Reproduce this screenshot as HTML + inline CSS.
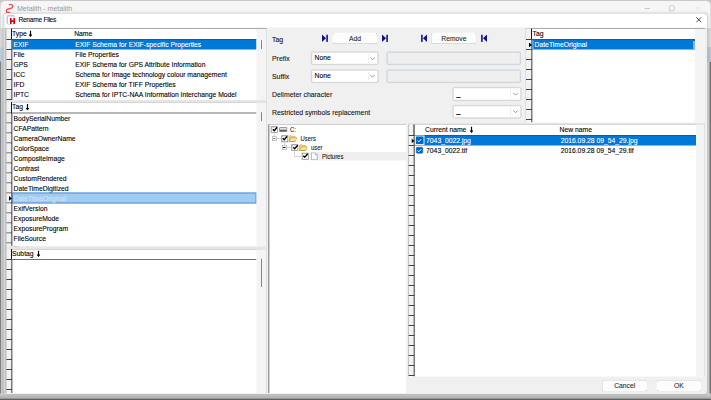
<!DOCTYPE html><html><head><meta charset="utf-8"><title>Rename Files</title><style>
html,body{margin:0;padding:0;background:#c9c9c9;overflow:hidden}
body{width:711px;height:400px;position:relative;font-family:"Liberation Sans",sans-serif;}
#st{position:absolute;left:0;top:0;width:1422px;height:800px;transform:scale(0.5);transform-origin:0 0;font-size:13.54px;color:#000;overflow:hidden;background:#c9c9c9;-webkit-text-stroke:0.2px}
#st div,#st span,#st svg{position:absolute;box-sizing:border-box;white-space:nowrap}
.tbl{background:#fff;overflow:hidden}
.sel{background:#0078d7}
.btn{background:#fdfdfd;border:1.4px solid #d0d0d0;border-radius:5px;text-align:center;border-bottom-color:#bdbdbd;-webkit-text-stroke:0.15px;color:#1c1c1c}
.cmb{background:#fff;border:1.8px solid #bcbcbc;border-radius:2.6px;box-shadow:0 0 0 1.6px #e2e2e2}
.dis{background:#efefef;border:1.7px solid #aebdcc;border-radius:3px;box-shadow:0 0 0 1.6px #dde3e9}
</style></head><body><div id="st">
<div style="left:1.2px;top:2px;width:1419.6px;height:78px;background:#f6f6f6;border-radius:9px 9px 0 0"></div>
<svg style="left:11.2px;top:6.8px" width="16.8" height="19.2" viewBox="0 0 16.8 19.2" preserveAspectRatio="none"><path d="M8 2.4 C11.8 0.4 16 4 14 7.6 C12 10.8 3.6 10.4 1.6 13.6 C0 16.8 4 18.8 8.4 18" fill="none" stroke="#e9564c" stroke-width="2.9" stroke-linecap="round"/></svg>
<div style="left:34px;top:6.4px;height:20px;line-height:20px;font-size:14.2px;color:#989898;letter-spacing:-0.1px;-webkit-text-stroke:0">Metalith - metalith</div>
<div style="left:1289.2px;top:16.2px;width:10.4px;height:1.2px;background:#9c9c9c"></div>
<div style="left:1338px;top:11.2px;width:11.2px;height:11px;border:1.3px solid #a6a6a6;border-radius:2.4px"></div>
<svg style="left:1390px;top:11.6px" width="10.4" height="10.4" viewBox="0 0 10.4 10.4" preserveAspectRatio="none"><path d="M0.6 0.6 L9.8 9.8 M9.8 0.6 L0.6 9.8" stroke="#dedede" stroke-width="1.2"/></svg>
<div style="left:0px;top:56px;width:12px;height:744px;background:#d8d8d8"></div>
<div style="left:0px;top:95px;width:12px;height:28px;background:#c0ccd8"></div>
<div style="left:0px;top:123px;width:12px;height:677px;background:#cacaca"></div>
<div style="left:0px;top:123px;width:2.2px;height:677px;background:#808488"></div>
<div style="left:1412px;top:56px;width:10px;height:744px;background:#dadada"></div>
<div style="left:1414px;top:95px;width:8px;height:2px;background:#a8a8a8"></div>
<div style="left:1414px;top:97px;width:8px;height:27px;background:#bcc3d0"></div>
<div style="left:1414px;top:124px;width:8px;height:676px;background:#d6d6d6"></div>
<div style="left:1419.4px;top:124px;width:2.6px;height:676px;background:#727272"></div>
<div style="left:0px;top:787.2px;width:1422px;height:12.8px;background:linear-gradient(#d4d4d4 0,#c8c8c8 14%,#c2c2c2 38%,#b6b6b6 48%,#b2b2b2 75%,#606060 81%,#5e5e5e 100%)"></div>
<div style="left:7.4px;top:25.6px;width:1407.6px;height:762.8px;background:#f0f0f0;border:1.6px solid #c2c2c2;border-left-color:#f6f6f6;border-bottom:2px solid #f3f3f3;border-radius:8px;box-shadow:0 0 5px rgba(0,0,0,0.2);overflow:hidden"><div style="left:0px;top:0px;width:1422px;height:28.4px;background:#fff"></div></div>
<div style="left:9.2px;top:34px;width:1.2px;height:22px;background:#dcdcdc"></div>
<div style="left:12.8px;top:30.4px;width:17px;height:19px;background:#fff;border:3.4px solid #a9cdec;border-radius:4.5px;border-right-width:1px;border-bottom-width:1.6px"></div>
<svg style="left:19.8px;top:35.6px" width="10" height="12.8" viewBox="0 0 10 12.8" preserveAspectRatio="none"><path d="M0 0 H3.3 V4.6 H6.7 V0 H10 V12.8 H6.7 V8 H3.3 V12.8 H0 Z" fill="#e2000f"/></svg>
<div style="left:36.8px;top:29.6px;height:20px;line-height:20px;font-size:13.2px;color:#0c0c0c;letter-spacing:-0.5px">Rename Files</div>
<svg style="left:1392.4px;top:34.4px" width="11.2" height="11.2" viewBox="0 0 11.2 11.2" preserveAspectRatio="none"><path d="M0.6 0.6 L10.6 10.6 M10.6 0.6 L0.6 10.6" stroke="#111" stroke-width="1.5"/></svg>
<div class="tbl" style="left:11.2px;top:56px;width:522.8px;height:144px"><div style="left:0px;top:0px;width:522.8px;height:1.6px;background:#adadad"></div><div style="left:13px;top:0.6px;height:20px;line-height:20px;z-index:2;">Type</div><div style="left:137.2px;top:0.6px;height:20px;line-height:20px;z-index:2;">Name</div><svg style="left:45.8px;top:4.8px" width="8" height="13.2" viewBox="0 0 8 13.2" preserveAspectRatio="none"><path d="M2.8 0 H5.2 V8 H7.9 L4 13.2 L0.1 8 H2.8 Z" fill="#000"/></svg><div class="sel" style="left:12.6px;top:23.4px;width:489px;height:20px;"></div><div style="left:16px;top:23.4px;height:20px;line-height:20px;color:#fff;">EXIF</div><div style="left:139.4px;top:23.4px;height:20px;line-height:20px;color:#fff;">EXIF Schema for EXIF-specific Properties</div><div style="left:16px;top:43.4px;height:20px;line-height:20px;">File</div><div style="left:139.4px;top:43.4px;height:20px;line-height:20px;">File Properties</div><div style="left:16px;top:63.4px;height:20px;line-height:20px;">GPS</div><div style="left:139.4px;top:63.4px;height:20px;line-height:20px;">EXIF Schema for GPS Attribute Information</div><div style="left:16px;top:83.4px;height:20px;line-height:20px;">ICC</div><div style="left:139.4px;top:83.4px;height:20px;line-height:20px;">Schema for Image technology colour management</div><div style="left:16px;top:103.4px;height:20px;line-height:20px;">IFD</div><div style="left:139.4px;top:103.4px;height:20px;line-height:20px;">EXIF Schema for TIFF Properties</div><div style="left:16px;top:123.4px;height:20px;line-height:20px;">IPTC</div><div style="left:139.4px;top:123.4px;height:20px;line-height:20px;">Schema for IPTC-NAA Information Interchange Model</div><div style="left:12px;top:21.8px;width:489.6px;height:2px;background:rgba(0,0,0,0.56)"></div><div style="left:0px;top:1.2px;width:12.8px;height:142.8px;background:#f2f2f2"></div><div style="left:11px;top:22.8px;width:2.4px;height:121.2px;background:#7c7c7c"></div><div style="left:11.2px;top:1.2px;width:2px;height:22.4px;background:#141414"></div><div style="left:1.2px;top:21.8px;width:11.6px;height:2px;background:#424242"></div><div style="left:1.2px;top:23.9px;width:10px;height:1.1px;background:#fff"></div><div style="left:1.2px;top:41.8px;width:11.6px;height:2px;background:#424242"></div><div style="left:1.2px;top:43.9px;width:10px;height:1.1px;background:#fff"></div><div style="left:1.2px;top:61.8px;width:11.6px;height:2px;background:#424242"></div><div style="left:1.2px;top:63.9px;width:10px;height:1.1px;background:#fff"></div><div style="left:1.2px;top:81.8px;width:11.6px;height:2px;background:#424242"></div><div style="left:1.2px;top:83.9px;width:10px;height:1.1px;background:#fff"></div><div style="left:1.2px;top:101.8px;width:11.6px;height:2px;background:#424242"></div><div style="left:1.2px;top:103.9px;width:10px;height:1.1px;background:#fff"></div><div style="left:1.2px;top:121.8px;width:11.6px;height:2px;background:#424242"></div><div style="left:1.2px;top:123.9px;width:10px;height:1.1px;background:#fff"></div><div style="left:1.2px;top:141.8px;width:11.6px;height:2px;background:#424242"></div><div style="left:1.2px;top:143.9px;width:10px;height:1.1px;background:#fff"></div><div style="left:0px;top:1.2px;width:1.2px;height:142.8px;background:#969696"></div><div style="left:501.6px;top:1.6px;width:21.2px;height:142.4px;background:#f4f4f4"></div><div style="left:521.8px;top:0px;width:1px;height:144px;background:#cdcdcd"></div><div style="left:511px;top:24px;width:1.8px;height:18px;background:#858585;border-radius:1px"></div></div>
<div class="tbl" style="left:11.2px;top:203.2px;width:522.8px;height:289.4px"><div style="left:0px;top:0px;width:522.8px;height:1.6px;background:#adadad"></div><div style="left:13px;top:0.5px;height:20px;line-height:20px;z-index:2;">Tag</div><svg style="left:40px;top:4.6px" width="8" height="13.2" viewBox="0 0 8 13.2" preserveAspectRatio="none"><path d="M2.8 0 H5.2 V8 H7.9 L4 13.2 L0.1 8 H2.8 Z" fill="#000"/></svg><div style="left:16px;top:23.8px;height:20px;line-height:20px;">BodySerialNumber</div><div style="left:16px;top:43.8px;height:20px;line-height:20px;">CFAPattern</div><div style="left:16px;top:63.8px;height:20px;line-height:20px;">CameraOwnerName</div><div style="left:16px;top:83.8px;height:20px;line-height:20px;">ColorSpace</div><div style="left:16px;top:103.8px;height:20px;line-height:20px;">CompositeImage</div><div style="left:16px;top:123.8px;height:20px;line-height:20px;">Contrast</div><div style="left:16px;top:143.8px;height:20px;line-height:20px;">CustomRendered</div><div style="left:16px;top:163.8px;height:20px;line-height:20px;">DateTimeDigitized</div><div style="left:12.4px;top:181.8px;width:489.2px;height:21.6px;background:#a1cbef;border:2px solid #4c94da"></div><div style="left:16px;top:183.8px;height:20px;line-height:20px;color:#d2e3f5;">DateTimeOriginal</div><div style="left:16px;top:203.8px;height:20px;line-height:20px;">ExifVersion</div><div style="left:16px;top:223.8px;height:20px;line-height:20px;">ExposureMode</div><div style="left:16px;top:243.8px;height:20px;line-height:20px;">ExposureProgram</div><div style="left:16px;top:263.8px;height:20px;line-height:20px;">FileSource</div><div style="left:16px;top:283.8px;height:20px;line-height:20px;">Flash</div><div style="left:12px;top:21.6px;width:489.6px;height:2px;background:rgba(0,0,0,0.56)"></div><div style="left:0px;top:1.2px;width:12.8px;height:288.2px;background:#f2f2f2"></div><div style="left:11px;top:22.6px;width:2.4px;height:266.8px;background:#7c7c7c"></div><div style="left:11.2px;top:1.2px;width:2px;height:22.2px;background:#141414"></div><div style="left:1.2px;top:21.6px;width:11.6px;height:2px;background:#424242"></div><div style="left:1.2px;top:23.7px;width:10px;height:1.1px;background:#fff"></div><div style="left:1.2px;top:41.6px;width:11.6px;height:2px;background:#424242"></div><div style="left:1.2px;top:43.7px;width:10px;height:1.1px;background:#fff"></div><div style="left:1.2px;top:61.6px;width:11.6px;height:2px;background:#424242"></div><div style="left:1.2px;top:63.7px;width:10px;height:1.1px;background:#fff"></div><div style="left:1.2px;top:81.6px;width:11.6px;height:2px;background:#424242"></div><div style="left:1.2px;top:83.7px;width:10px;height:1.1px;background:#fff"></div><div style="left:1.2px;top:101.6px;width:11.6px;height:2px;background:#424242"></div><div style="left:1.2px;top:103.7px;width:10px;height:1.1px;background:#fff"></div><div style="left:1.2px;top:121.6px;width:11.6px;height:2px;background:#424242"></div><div style="left:1.2px;top:123.7px;width:10px;height:1.1px;background:#fff"></div><div style="left:1.2px;top:141.6px;width:11.6px;height:2px;background:#424242"></div><div style="left:1.2px;top:143.7px;width:10px;height:1.1px;background:#fff"></div><div style="left:1.2px;top:161.6px;width:11.6px;height:2px;background:#424242"></div><div style="left:1.2px;top:163.7px;width:10px;height:1.1px;background:#fff"></div><div style="left:1.2px;top:181.6px;width:11.6px;height:2px;background:#424242"></div><div style="left:1.2px;top:183.7px;width:10px;height:1.1px;background:#fff"></div><div style="left:1.2px;top:201.6px;width:11.6px;height:2px;background:#424242"></div><div style="left:1.2px;top:203.7px;width:10px;height:1.1px;background:#fff"></div><div style="left:1.2px;top:221.6px;width:11.6px;height:2px;background:#424242"></div><div style="left:1.2px;top:223.7px;width:10px;height:1.1px;background:#fff"></div><div style="left:1.2px;top:241.6px;width:11.6px;height:2px;background:#424242"></div><div style="left:1.2px;top:243.7px;width:10px;height:1.1px;background:#fff"></div><div style="left:1.2px;top:261.6px;width:11.6px;height:2px;background:#424242"></div><div style="left:1.2px;top:263.7px;width:10px;height:1.1px;background:#fff"></div><div style="left:1.2px;top:281.6px;width:11.6px;height:2px;background:#424242"></div><div style="left:1.2px;top:283.7px;width:10px;height:1.1px;background:#fff"></div><div style="left:0px;top:1.2px;width:1.2px;height:288.2px;background:#969696"></div><svg style="left:6.6px;top:188.8px" width="6" height="9.6" viewBox="0 0 6 9.6" preserveAspectRatio="none"><path d="M0 0 L6 4.8 L0 9.6 Z" fill="#000"/></svg><div style="left:501.6px;top:1.6px;width:21.2px;height:287.8px;background:#f4f4f4"></div><div style="left:521.8px;top:0px;width:1px;height:289.4px;background:#cdcdcd"></div><div style="left:511px;top:20.8px;width:1.8px;height:18px;background:#858585;border-radius:1px"></div></div>
<div class="tbl" style="left:11.2px;top:497.2px;width:522.8px;height:289px"><div style="left:0px;top:0px;width:522.8px;height:1.6px;background:#adadad"></div><div style="left:13px;top:0px;height:20px;line-height:20px;z-index:2;">Subtag</div><svg style="left:61.6px;top:3.6px" width="8" height="13.2" viewBox="0 0 8 13.2" preserveAspectRatio="none"><path d="M2.8 0 H5.2 V8 H7.9 L4 13.2 L0.1 8 H2.8 Z" fill="#000"/></svg><div style="left:12px;top:20.6px;width:489.6px;height:2px;background:rgba(0,0,0,0.56)"></div><div style="left:0px;top:1.2px;width:12.8px;height:287.8px;background:#f2f2f2"></div><div style="left:11px;top:21.6px;width:2.4px;height:267.4px;background:#7c7c7c"></div><div style="left:11.2px;top:1.2px;width:2px;height:21.2px;background:#141414"></div><div style="left:1.2px;top:20.6px;width:11.6px;height:2px;background:#424242"></div><div style="left:1.2px;top:22.7px;width:10px;height:1.1px;background:#fff"></div><div style="left:1.2px;top:40.6px;width:11.6px;height:2px;background:#424242"></div><div style="left:1.2px;top:42.7px;width:10px;height:1.1px;background:#fff"></div><div style="left:1.2px;top:60.6px;width:11.6px;height:2px;background:#424242"></div><div style="left:1.2px;top:62.7px;width:10px;height:1.1px;background:#fff"></div><div style="left:1.2px;top:80.6px;width:11.6px;height:2px;background:#424242"></div><div style="left:1.2px;top:82.7px;width:10px;height:1.1px;background:#fff"></div><div style="left:1.2px;top:100.6px;width:11.6px;height:2px;background:#424242"></div><div style="left:1.2px;top:102.7px;width:10px;height:1.1px;background:#fff"></div><div style="left:1.2px;top:120.6px;width:11.6px;height:2px;background:#424242"></div><div style="left:1.2px;top:122.7px;width:10px;height:1.1px;background:#fff"></div><div style="left:1.2px;top:140.6px;width:11.6px;height:2px;background:#424242"></div><div style="left:1.2px;top:142.7px;width:10px;height:1.1px;background:#fff"></div><div style="left:1.2px;top:160.6px;width:11.6px;height:2px;background:#424242"></div><div style="left:1.2px;top:162.7px;width:10px;height:1.1px;background:#fff"></div><div style="left:1.2px;top:180.6px;width:11.6px;height:2px;background:#424242"></div><div style="left:1.2px;top:182.7px;width:10px;height:1.1px;background:#fff"></div><div style="left:1.2px;top:200.6px;width:11.6px;height:2px;background:#424242"></div><div style="left:1.2px;top:202.7px;width:10px;height:1.1px;background:#fff"></div><div style="left:1.2px;top:220.6px;width:11.6px;height:2px;background:#424242"></div><div style="left:1.2px;top:222.7px;width:10px;height:1.1px;background:#fff"></div><div style="left:1.2px;top:240.6px;width:11.6px;height:2px;background:#424242"></div><div style="left:1.2px;top:242.7px;width:10px;height:1.1px;background:#fff"></div><div style="left:1.2px;top:260.6px;width:11.6px;height:2px;background:#424242"></div><div style="left:1.2px;top:262.7px;width:10px;height:1.1px;background:#fff"></div><div style="left:1.2px;top:280.6px;width:11.6px;height:2px;background:#424242"></div><div style="left:1.2px;top:282.7px;width:10px;height:1.1px;background:#fff"></div><div style="left:0px;top:1.2px;width:1.2px;height:287.8px;background:#969696"></div><div style="left:501.6px;top:1.6px;width:21.2px;height:287.4px;background:#f4f4f4"></div><div style="left:521.8px;top:0px;width:1px;height:289px;background:#cdcdcd"></div><div style="left:511px;top:19.6px;width:1.8px;height:56.8px;background:#858585;border-radius:1px"></div></div>
<div style="left:11.2px;top:200px;width:522.8px;height:3.4px;background:#e6e6e6"></div>
<div style="left:11.2px;top:492.6px;width:522.8px;height:4.8px;background:#e6e6e6"></div>
<div style="left:9.2px;top:56px;width:3.4px;height:730.4px;background:#bebebe"></div>
<div style="left:544px;top:68.6px;height:20px;line-height:20px;font-size:13.8px;-webkit-text-stroke:0.2px;color:#151515">Tag</div>
<div style="left:544px;top:106.8px;height:20px;line-height:20px;font-size:13.8px;-webkit-text-stroke:0.2px;color:#151515">Prefix</div>
<div style="left:544px;top:142.8px;height:20px;line-height:20px;font-size:13.8px;-webkit-text-stroke:0.2px;color:#151515">Suffix</div>
<div style="left:544px;top:180.2px;height:20px;line-height:20px;font-size:13.8px;-webkit-text-stroke:0.2px;color:#151515">Delimeter character</div>
<div style="left:544px;top:215px;height:20px;line-height:20px;font-size:13.8px;-webkit-text-stroke:0.2px;color:#151515">Restricted symbols replacement</div>
<svg style="left:643.8px;top:69.4px" width="12" height="14.8" viewBox="0 0 12 14" preserveAspectRatio="none"><path d="M0 0 L8 7 L0 14 Z" fill="#12128c"/><rect x="8.6" y="0" width="3.2" height="14" fill="#12128c"/></svg>
<div class="btn" style="left:665px;top:65px;width:89.8px;height:23.2px;"><div style="left:0px;top:1px;height:20px;line-height:20px;left:0;right:0">Add</div></div>
<svg style="left:764px;top:69.4px" width="12" height="14.8" viewBox="0 0 12 14" preserveAspectRatio="none"><path d="M0 0 L8 7 L0 14 Z" fill="#12128c"/><rect x="8.6" y="0" width="3.2" height="14" fill="#12128c"/></svg>
<svg style="left:842px;top:69.4px" width="12" height="14.8" viewBox="0 0 12 14" preserveAspectRatio="none"><path d="M12 0 L4 7 L12 14 Z" fill="#12128c"/><rect x="0.2" y="0" width="3.2" height="14" fill="#12128c"/></svg>
<div class="btn" style="left:862.4px;top:65px;width:90.8px;height:23.2px;"><div style="left:0px;top:1px;height:20px;line-height:20px;left:0;right:0">Remove</div></div>
<svg style="left:962px;top:69.4px" width="12" height="14.8" viewBox="0 0 12 14" preserveAspectRatio="none"><path d="M12 0 L4 7 L12 14 Z" fill="#12128c"/><rect x="0.2" y="0" width="3.2" height="14" fill="#12128c"/></svg>
<div class="cmb" style="left:623.2px;top:104.4px;width:132.8px;height:24.8px;"><div style="left:4.8px;top:0.8px;height:20px;line-height:20px;">None</div><div style="left:112.4px;top:2.8px;width:0.8px;height:17.6px;background:#e0e0e0"></div><svg style="left:115.6px;top:8.4px" width="10.4" height="6.4" viewBox="0 0 10.4 6.4" preserveAspectRatio="none"><path d="M0.6 0.8 L5.2 5.4 L9.8 0.8" fill="none" stroke="#707070" stroke-width="1.4"/></svg></div>
<div class="dis" style="left:774.4px;top:104.4px;width:266.4px;height:24.8px;"></div>
<div class="cmb" style="left:623.2px;top:139.8px;width:132.8px;height:24.8px;"><div style="left:4.8px;top:0.8px;height:20px;line-height:20px;">None</div><div style="left:112.4px;top:2.8px;width:0.8px;height:17.6px;background:#e0e0e0"></div><svg style="left:115.6px;top:8.4px" width="10.4" height="6.4" viewBox="0 0 10.4 6.4" preserveAspectRatio="none"><path d="M0.6 0.8 L5.2 5.4 L9.8 0.8" fill="none" stroke="#707070" stroke-width="1.4"/></svg></div>
<div class="dis" style="left:774.4px;top:139.8px;width:266.4px;height:24.8px;"></div>
<div class="cmb" style="left:906.4px;top:175.2px;width:135.6px;height:25.6px;"><div style="left:5.8px;top:0.8px;height:20px;line-height:20px;-webkit-text-stroke:0.6px;color:#333">_</div><div style="left:112.8px;top:2.8px;width:0.8px;height:18.4px;background:#e2e2e2"></div><svg style="left:118.8px;top:8.8px" width="10.4" height="6.4" viewBox="0 0 10.4 6.4" preserveAspectRatio="none"><path d="M0.6 0.8 L5.2 5.4 L9.8 0.8" fill="none" stroke="#707070" stroke-width="1.4"/></svg></div>
<div class="cmb" style="left:906.4px;top:210.6px;width:135.6px;height:25.6px;"><div style="left:5.8px;top:0.8px;height:20px;line-height:20px;-webkit-text-stroke:0.6px;color:#333">_</div><div style="left:112.8px;top:2.8px;width:0.8px;height:18.4px;background:#e2e2e2"></div><svg style="left:118.8px;top:8.8px" width="10.4" height="6.4" viewBox="0 0 10.4 6.4" preserveAspectRatio="none"><path d="M0.6 0.8 L5.2 5.4 L9.8 0.8" fill="none" stroke="#707070" stroke-width="1.4"/></svg></div>
<div style="left:536.2px;top:248.6px;width:276.2px;height:537.6px;background:#fff"></div>
<div style="left:536.2px;top:248.6px;width:276.2px;height:1.2px;background:#a4a4a4"></div>
<div style="left:536.2px;top:248.6px;width:3px;height:537.6px;background:#9c9c9c"></div>
<div style="left:619.6px;top:304.4px;width:192.8px;height:16.2px;background:#efefef"></div>
<div style="left:548.2px;top:265.6px;width:1px;height:6.8px;background:#a8a8a8"></div>
<div style="left:553.2px;top:277px;width:8.8px;height:1px;background:#a8a8a8"></div>
<div style="left:568.6px;top:283.6px;width:1px;height:6.4px;background:#a8a8a8"></div>
<div style="left:573.6px;top:294.6px;width:9.2px;height:1px;background:#a8a8a8"></div>
<div style="left:589.2px;top:300.8px;width:1px;height:12.4px;background:#a8a8a8"></div>
<div style="left:589.2px;top:312.2px;width:14px;height:1px;background:#a8a8a8"></div>
<div style="left:542.2px;top:252.6px;width:12.8px;height:12.8px;background:#fff;border:1.8px solid #6e6e6e;box-shadow:0 0 0 1px #cfcfcf, inset 1px 1px 0 #b8b8b8"></div><svg style="left:543.6px;top:253px" width="11.2" height="11.2" viewBox="0 0 11.2 11.2" preserveAspectRatio="none"><path d="M1.6 5.6 L4.4 8.6 L10.4 1.4" fill="none" stroke="#000" stroke-width="2.7" stroke-linejoin="miter"/></svg>
<svg style="left:558px;top:254px" width="16.8" height="10.4" viewBox="0 0 16.8 10.4" preserveAspectRatio="none"><rect x="0.7" y="0.7" width="15.4" height="9" rx="2.6" fill="#e2e2e2" stroke="#555" stroke-width="1.3"/><rect x="1.4" y="5.6" width="14" height="3.6" rx="1.4" fill="#5e5e5e"/></svg>
<div style="left:580px;top:248.8px;height:20px;line-height:20px;font-size:13.5px;transform:scaleX(0.875);transform-origin:0 50%;-webkit-text-stroke:0.18px;color:#151515;">C:</div>
<div style="left:543.6px;top:272.8px;width:9.2px;height:9.2px;background:#fff;border:1.2px solid #8c8c8c"></div><div style="left:545.8px;top:276.8px;width:4.8px;height:1.2px;background:#111"></div>
<div style="left:562.8px;top:271px;width:12.8px;height:12.8px;background:#fff;border:1.8px solid #6e6e6e;box-shadow:0 0 0 1px #cfcfcf, inset 1px 1px 0 #b8b8b8"></div><svg style="left:564.2px;top:271.4px" width="11.2" height="11.2" viewBox="0 0 11.2 11.2" preserveAspectRatio="none"><path d="M1.6 5.6 L4.4 8.6 L10.4 1.4" fill="none" stroke="#000" stroke-width="2.7" stroke-linejoin="miter"/></svg>
<svg style="left:577.2px;top:270px" width="17.6" height="14" viewBox="0 0 17.6 14" preserveAspectRatio="none"><path d="M1 2.8 Q1 1.6 2.2 1.6 H5.6 L7.2 3.2 H13 Q14 3.2 14 4.2 V5.4 H4.6 L1 12.4 Z" fill="#f3d672" stroke="#c79a34" stroke-width="1"/><path d="M4.4 5.6 H16.8 L13.4 13 H1 Z" fill="#fbe28c" stroke="#c4962e" stroke-width="1.1"/><path d="M1.4 13 H13.4" stroke="#b48622" stroke-width="1.2"/></svg>
<div style="left:601.2px;top:267.4px;height:20px;line-height:20px;font-size:13.5px;transform:scaleX(0.875);transform-origin:0 50%;-webkit-text-stroke:0.18px;color:#151515;">Users</div>
<div style="left:564.2px;top:290.4px;width:9.2px;height:9.2px;background:#fff;border:1.2px solid #8c8c8c"></div><div style="left:566.4px;top:294.4px;width:4.8px;height:1.2px;background:#111"></div>
<div style="left:583.4px;top:288.6px;width:12.8px;height:12.8px;background:#fff;border:1.8px solid #6e6e6e;box-shadow:0 0 0 1px #cfcfcf, inset 1px 1px 0 #b8b8b8"></div><svg style="left:584.8px;top:289px" width="11.2" height="11.2" viewBox="0 0 11.2 11.2" preserveAspectRatio="none"><path d="M1.6 5.6 L4.4 8.6 L10.4 1.4" fill="none" stroke="#000" stroke-width="2.7" stroke-linejoin="miter"/></svg>
<svg style="left:597.8px;top:287.6px" width="17.6" height="14" viewBox="0 0 17.6 14" preserveAspectRatio="none"><path d="M1 2.8 Q1 1.6 2.2 1.6 H5.6 L7.2 3.2 H13 Q14 3.2 14 4.2 V5.4 H4.6 L1 12.4 Z" fill="#f3d672" stroke="#c79a34" stroke-width="1"/><path d="M4.4 5.6 H16.8 L13.4 13 H1 Z" fill="#fbe28c" stroke="#c4962e" stroke-width="1.1"/><path d="M1.4 13 H13.4" stroke="#b48622" stroke-width="1.2"/></svg>
<div style="left:622px;top:285.6px;height:20px;line-height:20px;font-size:13.5px;transform:scaleX(0.875);transform-origin:0 50%;-webkit-text-stroke:0.18px;color:#151515;">user</div>
<div style="left:604px;top:306px;width:12.8px;height:12.8px;background:#fff;border:1.8px solid #6e6e6e;box-shadow:0 0 0 1px #cfcfcf, inset 1px 1px 0 #b8b8b8"></div><svg style="left:605.4px;top:306.4px" width="11.2" height="11.2" viewBox="0 0 11.2 11.2" preserveAspectRatio="none"><path d="M1.6 5.6 L4.4 8.6 L10.4 1.4" fill="none" stroke="#000" stroke-width="2.7" stroke-linejoin="miter"/></svg>
<svg style="left:622.4px;top:304.8px" width="13.2" height="15.2" viewBox="0 0 13.2 15.2" preserveAspectRatio="none"><path d="M0.6 0.6 H8.6 L12.6 4.6 V14.6 H0.6 Z" fill="#fff" stroke="#7a8ca2" stroke-width="1.3"/><path d="M8.6 0.6 V4.6 H12.6" fill="#e0e8f2" stroke="#8a98a8" stroke-width="1.1"/></svg>
<div style="left:643.6px;top:303.4px;height:20px;line-height:20px;font-size:13.5px;transform:scaleX(0.875);transform-origin:0 50%;-webkit-text-stroke:0.18px;color:#151515;">Pictures</div>
<div class="tbl" style="left:816.2px;top:247.4px;width:594.2px;height:505.2px"><div style="left:0px;top:0px;width:594.2px;height:1.6px;background:#adadad"></div><div style="left:33.8px;top:2px;height:20px;line-height:20px;z-index:2;">Current name</div><div style="left:303px;top:2px;height:20px;line-height:20px;z-index:2;">New name</div><svg style="left:122.6px;top:5.2px" width="8" height="13.2" viewBox="0 0 8 13.2" preserveAspectRatio="none"><path d="M2.8 0 H5.2 V8 H7.9 L4 13.2 L0.1 8 H2.8 Z" fill="#000"/></svg><div class="sel" style="left:12.6px;top:23.8px;width:562.8px;height:20px;"></div><div style="left:36px;top:23.8px;height:20px;line-height:20px;color:#fff;">7043_0022.jpg</div><div style="left:305.2px;top:23.8px;height:20px;line-height:20px;color:#fff;">2016.09.28 09_54_29.jpg</div><div style="left:36px;top:43.8px;height:20px;line-height:20px;">7043_0022.tif</div><div style="left:305.2px;top:43.8px;height:20px;line-height:20px;">2016.09.28 09_54_29.tif</div><div style="left:12px;top:22.2px;width:563.4px;height:2px;background:rgba(0,0,0,0.56)"></div><div style="left:0px;top:1.2px;width:12.8px;height:504px;background:#f2f2f2"></div><div style="left:11px;top:23.2px;width:2.4px;height:482px;background:#7c7c7c"></div><div style="left:11.2px;top:1.2px;width:2px;height:22.8px;background:#141414"></div><div style="left:1.2px;top:22.2px;width:11.6px;height:2px;background:#424242"></div><div style="left:1.2px;top:24.3px;width:10px;height:1.1px;background:#fff"></div><div style="left:1.2px;top:42.2px;width:11.6px;height:2px;background:#424242"></div><div style="left:1.2px;top:44.3px;width:10px;height:1.1px;background:#fff"></div><div style="left:1.2px;top:62.2px;width:11.6px;height:2px;background:#424242"></div><div style="left:1.2px;top:64.3px;width:10px;height:1.1px;background:#fff"></div><div style="left:1.2px;top:82.2px;width:11.6px;height:2px;background:#424242"></div><div style="left:1.2px;top:84.3px;width:10px;height:1.1px;background:#fff"></div><div style="left:1.2px;top:102.2px;width:11.6px;height:2px;background:#424242"></div><div style="left:1.2px;top:104.3px;width:10px;height:1.1px;background:#fff"></div><div style="left:1.2px;top:122.2px;width:11.6px;height:2px;background:#424242"></div><div style="left:1.2px;top:124.3px;width:10px;height:1.1px;background:#fff"></div><div style="left:1.2px;top:142.2px;width:11.6px;height:2px;background:#424242"></div><div style="left:1.2px;top:144.3px;width:10px;height:1.1px;background:#fff"></div><div style="left:1.2px;top:162.2px;width:11.6px;height:2px;background:#424242"></div><div style="left:1.2px;top:164.3px;width:10px;height:1.1px;background:#fff"></div><div style="left:1.2px;top:182.2px;width:11.6px;height:2px;background:#424242"></div><div style="left:1.2px;top:184.3px;width:10px;height:1.1px;background:#fff"></div><div style="left:1.2px;top:202.2px;width:11.6px;height:2px;background:#424242"></div><div style="left:1.2px;top:204.3px;width:10px;height:1.1px;background:#fff"></div><div style="left:1.2px;top:222.2px;width:11.6px;height:2px;background:#424242"></div><div style="left:1.2px;top:224.3px;width:10px;height:1.1px;background:#fff"></div><div style="left:1.2px;top:242.2px;width:11.6px;height:2px;background:#424242"></div><div style="left:1.2px;top:244.3px;width:10px;height:1.1px;background:#fff"></div><div style="left:1.2px;top:262.2px;width:11.6px;height:2px;background:#424242"></div><div style="left:1.2px;top:264.3px;width:10px;height:1.1px;background:#fff"></div><div style="left:1.2px;top:282.2px;width:11.6px;height:2px;background:#424242"></div><div style="left:1.2px;top:284.3px;width:10px;height:1.1px;background:#fff"></div><div style="left:1.2px;top:302.2px;width:11.6px;height:2px;background:#424242"></div><div style="left:1.2px;top:304.3px;width:10px;height:1.1px;background:#fff"></div><div style="left:1.2px;top:322.2px;width:11.6px;height:2px;background:#424242"></div><div style="left:1.2px;top:324.3px;width:10px;height:1.1px;background:#fff"></div><div style="left:1.2px;top:342.2px;width:11.6px;height:2px;background:#424242"></div><div style="left:1.2px;top:344.3px;width:10px;height:1.1px;background:#fff"></div><div style="left:1.2px;top:362.2px;width:11.6px;height:2px;background:#424242"></div><div style="left:1.2px;top:364.3px;width:10px;height:1.1px;background:#fff"></div><div style="left:1.2px;top:382.2px;width:11.6px;height:2px;background:#424242"></div><div style="left:1.2px;top:384.3px;width:10px;height:1.1px;background:#fff"></div><div style="left:1.2px;top:402.2px;width:11.6px;height:2px;background:#424242"></div><div style="left:1.2px;top:404.3px;width:10px;height:1.1px;background:#fff"></div><div style="left:1.2px;top:422.2px;width:11.6px;height:2px;background:#424242"></div><div style="left:1.2px;top:424.3px;width:10px;height:1.1px;background:#fff"></div><div style="left:1.2px;top:442.2px;width:11.6px;height:2px;background:#424242"></div><div style="left:1.2px;top:444.3px;width:10px;height:1.1px;background:#fff"></div><div style="left:1.2px;top:462.2px;width:11.6px;height:2px;background:#424242"></div><div style="left:1.2px;top:464.3px;width:10px;height:1.1px;background:#fff"></div><div style="left:1.2px;top:482.2px;width:11.6px;height:2px;background:#424242"></div><div style="left:1.2px;top:484.3px;width:10px;height:1.1px;background:#fff"></div><div style="left:1.2px;top:502.2px;width:11.6px;height:2px;background:#424242"></div><div style="left:1.2px;top:504.3px;width:10px;height:1.1px;background:#fff"></div><div style="left:0px;top:1.2px;width:1.2px;height:504px;background:#969696"></div><svg style="left:6.6px;top:29.4px" width="6" height="9.6" viewBox="0 0 6 9.6" preserveAspectRatio="none"><path d="M0 0 L6 4.8 L0 9.6 Z" fill="#000"/></svg><div style="left:575.4px;top:1.6px;width:18.8px;height:503.6px;background:#f4f4f4"></div><div style="left:593.2px;top:0px;width:1px;height:505.2px;background:#cdcdcd"></div><div style="left:14.2px;top:23.4px;width:18.2px;height:19.2px;border:2px solid #e4f0fc"></div><div style="left:16.2px;top:26.2px;width:13.6px;height:13.6px;background:#0063bb;border:1.4px solid #0063bb;border-radius:2.5px"></div><svg style="left:16.2px;top:26.2px" width="13.6" height="13.6" viewBox="0 0 13.6 13.6" preserveAspectRatio="none"><path d="M2.9 7 L5.5 9.7 L10.8 4.1" fill="none" stroke="#fff" stroke-width="1.9"/></svg><div style="left:16.2px;top:46.4px;width:13.6px;height:13.6px;background:#0063bb;border:1.4px solid #0063bb;border-radius:2.5px"></div><svg style="left:16.2px;top:46.4px" width="13.6" height="13.6" viewBox="0 0 13.6 13.6" preserveAspectRatio="none"><path d="M2.9 7 L5.5 9.7 L10.8 4.1" fill="none" stroke="#fff" stroke-width="1.9"/></svg></div>
<div class="tbl" style="left:1051.2px;top:56px;width:359.6px;height:189.2px"><div style="left:0px;top:0px;width:359.6px;height:1.6px;background:#adadad"></div><div style="left:14px;top:0.6px;height:20px;line-height:20px;z-index:2;">Tag</div><div class="sel" style="left:12.6px;top:23.4px;width:326.6px;height:20px;"></div><div style="left:18px;top:23.4px;height:20px;line-height:20px;color:#fff;">DateTimeOriginal</div><div style="left:12px;top:21.8px;width:327.2px;height:2px;background:rgba(0,0,0,0.56)"></div><div style="left:0px;top:1.2px;width:12.8px;height:188px;background:#f2f2f2"></div><div style="left:11px;top:22.8px;width:2.4px;height:166.4px;background:#7c7c7c"></div><div style="left:11.2px;top:1.2px;width:2px;height:22.4px;background:#141414"></div><div style="left:1.2px;top:21.8px;width:11.6px;height:2px;background:#424242"></div><div style="left:1.2px;top:23.9px;width:10px;height:1.1px;background:#fff"></div><div style="left:1.2px;top:41.8px;width:11.6px;height:2px;background:#424242"></div><div style="left:1.2px;top:43.9px;width:10px;height:1.1px;background:#fff"></div><div style="left:1.2px;top:61.8px;width:11.6px;height:2px;background:#424242"></div><div style="left:1.2px;top:63.9px;width:10px;height:1.1px;background:#fff"></div><div style="left:1.2px;top:81.8px;width:11.6px;height:2px;background:#424242"></div><div style="left:1.2px;top:83.9px;width:10px;height:1.1px;background:#fff"></div><div style="left:1.2px;top:101.8px;width:11.6px;height:2px;background:#424242"></div><div style="left:1.2px;top:103.9px;width:10px;height:1.1px;background:#fff"></div><div style="left:1.2px;top:121.8px;width:11.6px;height:2px;background:#424242"></div><div style="left:1.2px;top:123.9px;width:10px;height:1.1px;background:#fff"></div><div style="left:1.2px;top:141.8px;width:11.6px;height:2px;background:#424242"></div><div style="left:1.2px;top:143.9px;width:10px;height:1.1px;background:#fff"></div><div style="left:1.2px;top:161.8px;width:11.6px;height:2px;background:#424242"></div><div style="left:1.2px;top:163.9px;width:10px;height:1.1px;background:#fff"></div><div style="left:1.2px;top:181.8px;width:11.6px;height:2px;background:#424242"></div><div style="left:1.2px;top:183.9px;width:10px;height:1.1px;background:#fff"></div><div style="left:0px;top:1.2px;width:1.2px;height:188px;background:#969696"></div><svg style="left:6.6px;top:29px" width="6" height="9.6" viewBox="0 0 6 9.6" preserveAspectRatio="none"><path d="M0 0 L6 4.8 L0 9.6 Z" fill="#000"/></svg><div style="left:339.2px;top:1.6px;width:20.4px;height:187.6px;background:#f4f4f4"></div><div style="left:358.6px;top:0px;width:1px;height:189.2px;background:#cdcdcd"></div><div style="left:334.8px;top:26px;width:3.6px;height:16px;background:#7db8f0"></div><div style="left:14.2px;top:25.2px;width:1.6px;height:17.2px;background:#8cc0f2"></div></div>
<div class="btn" style="left:1204px;top:760.4px;width:90.8px;height:23px;"><div style="left:0px;top:1px;height:20px;line-height:20px;left:0;right:0">Cancel</div></div>
<div class="btn" style="left:1312.8px;top:760.4px;width:90.4px;height:23px;"><div style="left:0px;top:1px;height:20px;line-height:20px;left:0;right:0">OK</div></div>
</div></body></html>
